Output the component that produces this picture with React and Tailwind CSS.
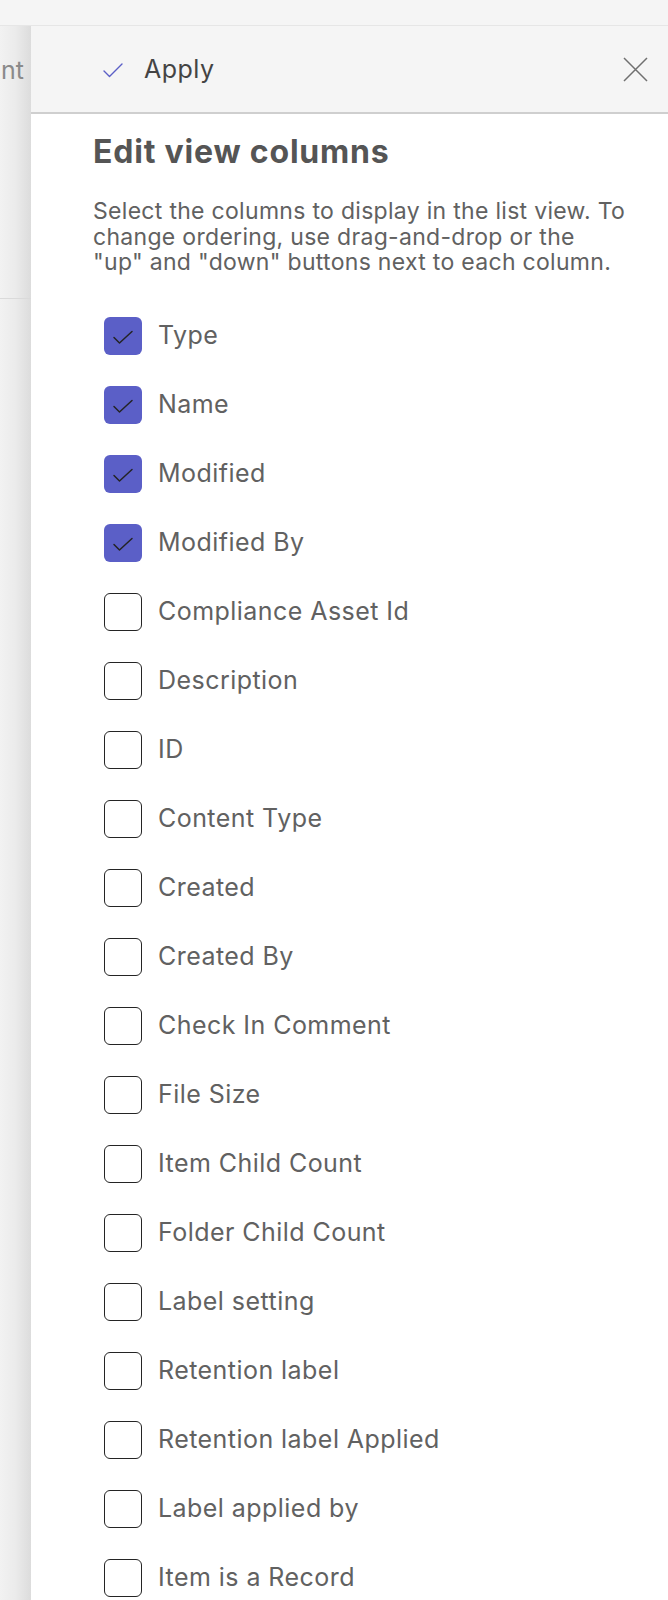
import React from "react";

const columns = [
  ["Type", true],
  ["Name", true],
  ["Modified", true],
  ["Modified By", true],
  ["Compliance Asset Id", false],
  ["Description", false],
  ["ID", false],
  ["Content Type", false],
  ["Created", false],
  ["Created By", false],
  ["Check In Comment", false],
  ["File Size", false],
  ["Item Child Count", false],
  ["Folder Child Count", false],
  ["Label setting", false],
  ["Retention label", false],
  ["Retention label Applied", false],
  ["Label applied by", false],
  ["Item is a Record", false],
];

function CheckRow({ label, checked }) {
  return (
    <div className="flex h-[38px] items-center">
      {checked ? (
        <div className="h-[38px] w-[38px] rounded-[6px] bg-[#5b5fc7]">
          <svg width="38" height="38" viewBox="0 0 38 38" fill="none">
            <path d="M10 20.5 L15.5 26 L28 14.5" stroke="#242424" strokeWidth="1.5" strokeLinecap="round" strokeLinejoin="round" />
          </svg>
        </div>
      ) : (
        <div className="h-[38px] w-[38px] rounded-[6px] border-[1.5px] border-[#242424] bg-white" />
      )}
      <span className="ml-[16px] text-[25px] leading-none tracking-[0.45px] text-[#616161]">{label}</span>
    </div>
  );
}

export default function App() {
  return (
    <div className="h-[1600px] w-[668px] overflow-hidden bg-white" style={{ fontFamily: "Inter, 'Noto Sans', sans-serif" }}>
      <div className="h-[26px] border-b border-[#e6e6e6] bg-[#f5f5f5]" />
      <div className="flex h-[1574px]">
        <div className="w-[31px] shrink-0 bg-gradient-to-r from-[#f2f2f2] via-[#ebebeb] to-[#dcdcdc]">
          <div className="flex h-[90px] items-center justify-end pr-[7px] text-[25px] text-[#8a8a8a]">nt</div>
          <div className="mt-[182px] h-px bg-[#dadada]" />
        </div>
        <div className="flex-1 bg-white">
          <div className="flex h-[88px] items-center border-b-2 border-[#cfcfcf] bg-[#f5f5f5] pl-[72px] pr-[20px]">
            <svg className="mt-[2px]" width="20" height="15" viewBox="0 0 20 15" fill="none">
              <path d="M1 8 L6.5 13.5 L19 1" stroke="#5b5fc7" strokeWidth="1.4" strokeLinecap="round" strokeLinejoin="round" />
            </svg>
            <span className="ml-[21px] mt-[2px] text-[25px] tracking-[0.5px] text-[#444444]">Apply</span>
            <svg className="ml-auto" width="25" height="25" viewBox="0 0 25 25" fill="none">
              <path d="M1 1 L24 24 M24 1 L1 24" stroke="#707070" strokeWidth="1.5" />
            </svg>
          </div>
          <div className="pl-[62px]">
            <h1 className="mt-[18px] text-[32px] font-bold leading-[40px] tracking-[0.8px] text-[#555555]">Edit view columns</h1>
            <p className="mt-[27px] text-[23px] leading-[25.5px] tracking-[0.3px] text-[#616161]">
              Select the columns to display in the list view. To
              <br />
              change ordering, use drag-and-drop or the
              <br />
              "up" and "down" buttons next to each column.
            </p>
            <div className="mt-[41px] flex flex-col gap-[31px] pl-[11px]">
              {columns.map(([label, checked]) => (
                <CheckRow key={label} label={label} checked={checked} />
              ))}
            </div>
          </div>
        </div>
      </div>
    </div>
  );
}
